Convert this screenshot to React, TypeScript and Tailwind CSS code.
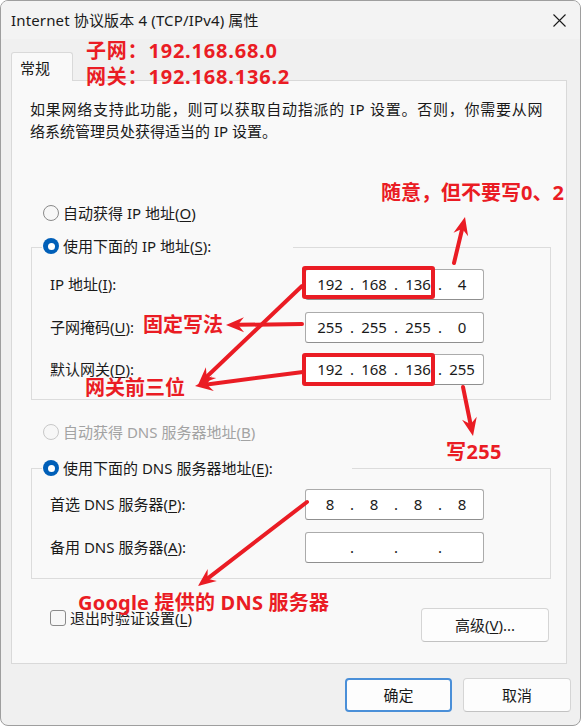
import React from "react";

const RED = "#ea1c24";

function Arrow({ x1, y1, x2, y2 }: { x1: number; y1: number; x2: number; y2: number }) {
  const dx = x2 - x1;
  const dy = y2 - y1;
  const L = Math.hypot(dx, dy);
  const ux = dx / L;
  const uy = dy / L;
  const hl = 18;
  const hw = 7.5;
  const notch = 12;
  const bx = x2 - ux * hl;
  const by = y2 - uy * hl;
  const px = -uy;
  const py = ux;
  const nx = x2 - ux * notch;
  const ny = y2 - uy * notch;
  const pts = `${x2},${y2} ${bx + px * hw},${by + py * hw} ${nx},${ny} ${bx - px * hw},${by - py * hw}`;
  return (
    <g>
      <line x1={x1} y1={y1} x2={nx} y2={ny} stroke={RED} strokeWidth={4} strokeLinecap="round" />
      <polygon points={pts} fill={RED} />
    </g>
  );
}

function Radio({ checked, disabled }: { checked?: boolean; disabled?: boolean }) {
  if (checked) {
    return (
      <span className="flex h-[16px] w-[16px] shrink-0 items-center justify-center rounded-full bg-[#005fb8]">
        <span className="h-[7px] w-[7px] rounded-full bg-white" />
      </span>
    );
  }
  return (
    <span
      className={
        disabled
          ? "h-[16px] w-[16px] shrink-0 rounded-full border border-[#c8c8c8] bg-[#f7f7f7]"
          : "h-[16px] w-[16px] shrink-0 rounded-full border border-[#8a8a8a] bg-[#f7f7f7]"
      }
    />
  );
}

function IpField({ parts }: { parts: string[] }) {
  return (
    <div className="mr-[66px] ml-auto flex h-[31px] w-[179px] items-center rounded-[3px] border border-[#ababab] border-b-[#8f8f8f] bg-white pl-[6px] font-['Noto_Sans',sans-serif] text-[15px] text-[#1a1a1a]">
      <span className="w-[36px] text-center">{parts[0]}</span>
      <span className="w-[8px] text-center">.</span>
      <span className="w-[36px] text-center">{parts[1]}</span>
      <span className="w-[8px] text-center">.</span>
      <span className="w-[36px] text-center">{parts[2]}</span>
      <span className="w-[8px] text-center">.</span>
      <span className="w-[36px] text-center">{parts[3]}</span>
    </div>
  );
}

export default function App() {
  return (
    <div className="relative h-[726px] w-[581px] font-['Noto_Sans','Noto_Sans_CJK_SC',sans-serif] text-[15px] text-[#1a1a1a]">
      <div className="flex h-[726px] w-[581px] flex-col overflow-hidden rounded-[8px] border border-[#9e9e9e] bg-[#f0f0f0]">
        {/* Title bar */}
        <div className="flex h-[38px] shrink-0 items-center justify-between bg-[#f3f3f3] pl-[10px] pr-[14px]">
          <span className="leading-[22px] tracking-[0.15px]">Internet 协议版本 4 (TCP/IPv4) 属性</span>
          <svg width="13" height="13" viewBox="0 0 13 13">
            <path d="M0.5 0.5 L12.5 12.5 M12.5 0.5 L0.5 12.5" stroke="#1a1a1a" strokeWidth="1.1" />
          </svg>
        </div>

        {/* Tabs */}
        <div className="ml-[10px] mt-[13px] flex">
          <div className="relative z-10 -mb-px flex h-[29px] w-[62px] items-center rounded-t-[3px] border border-b-0 border-[#d9d9d9] bg-[#f9f9f9] pl-[8px] pt-[1px] leading-[22px]">
            常规
          </div>
        </div>

        {/* Panel */}
        <div className="ml-[10px] flex h-[584px] w-[556px] flex-col border border-[#d9d9d9] bg-[#f9f9f9]">
          <p className="ml-[18px] mt-[17px] leading-[22px]">
            <span className="tracking-[0.75px]">如果网络支持此功能，则可以获取自动指派的 IP 设置。否则，你需要从网</span>
            <br />
            络系统管理员处获得适当的 IP 设置。
          </p>

          <div className="ml-[31px] mt-[60px] flex h-[22px] items-center gap-[4px]">
            <Radio />
            <span className="leading-[22px]">
              自动获得 IP 地址(<u className="underline-offset-2">O</u>)
            </span>
          </div>

          {/* IP group */}
          <div className="ml-[19px] mt-[23px] flex h-[153px] w-[520px] flex-col border border-[#dcdcdc]">
            <div className="-mt-[13px] ml-[10px] flex h-[22px] w-[251px] items-center gap-[4px] bg-[#f9f9f9] pl-[1px]">
              <Radio checked />
              <span className="leading-[22px]">
                使用下面的 IP 地址(<u className="underline-offset-2">S</u>):
              </span>
            </div>
            <div className="mt-[12px] flex h-[31px] items-center">
              <span className="ml-[18px]">
                IP 地址(<u className="underline-offset-2">I</u>):
              </span>
              <IpField parts={["192", "168", "136", "4"]} />
            </div>
            <div className="mt-[12px] flex h-[31px] items-center">
              <span className="ml-[18px]">
                子网掩码(<u className="underline-offset-2">U</u>):
              </span>
              <IpField parts={["255", "255", "255", "0"]} />
            </div>
            <div className="mt-[11px] flex h-[31px] items-center">
              <span className="ml-[18px]">
                默认网关(<u className="underline-offset-2">D</u>):
              </span>
              <IpField parts={["192", "168", "136", "255"]} />
            </div>
          </div>

          <div className="ml-[31px] mt-[21px] flex h-[22px] items-center gap-[4px] text-[#a3a3a3]">
            <Radio disabled />
            <span className="leading-[22px]">
              自动获得 DNS 服务器地址(<u className="underline-offset-2">B</u>)
            </span>
          </div>

          {/* DNS group */}
          <div className="ml-[19px] mt-[25px] flex h-[111px] w-[520px] flex-col border border-[#dcdcdc]">
            <div className="-mt-[12px] ml-[10px] flex h-[22px] w-[310px] items-center gap-[4px] bg-[#f9f9f9] pl-[1px]">
              <Radio checked />
              <span className="leading-[22px]">
                使用下面的 DNS 服务器地址(<u className="underline-offset-2">E</u>):
              </span>
            </div>
            <div className="mt-[10px] flex h-[31px] items-center">
              <span className="ml-[18px]">
                首选 DNS 服务器(<u className="underline-offset-2">P</u>):
              </span>
              <IpField parts={["8", "8", "8", "8"]} />
            </div>
            <div className="mt-[12px] flex h-[31px] items-center">
              <span className="ml-[18px]">
                备用 DNS 服务器(<u className="underline-offset-2">A</u>):
              </span>
              <IpField parts={["", "", "", ""]} />
            </div>
          </div>

          <div className="mt-[28px] flex items-start justify-between pr-[17px]">
            <div className="ml-[38px] flex h-[22px] items-center gap-[4px]">
              <span className="h-[16px] w-[16px] rounded-[3px] border border-[#8a8a8a] bg-[#f7f7f7]" />
              <span className="leading-[22px]">
                退出时验证设置(<u className="underline-offset-2">L</u>)
              </span>
            </div>
            <button className="mt-[1px] flex h-[34px] w-[128px] items-center justify-center rounded-[4px] border border-[#d5d5d5] border-b-[#c2c2c2] bg-[#fdfdfd] leading-[22px]">
              高级(<u className="underline-offset-2">V</u>)...
            </button>
          </div>
        </div>

        {/* Footer */}
        <div className="mt-[14px] flex justify-end gap-[11px] pr-[9px]">
          <button className="flex h-[34px] w-[107px] items-center justify-center rounded-[4px] border-2 border-[#4a8fd8] bg-[#fdfdfd] leading-[22px]">
            确定
          </button>
          <button className="flex h-[34px] w-[108px] items-center justify-center rounded-[4px] border border-[#d5d5d5] border-b-[#c2c2c2] bg-[#fdfdfd] leading-[22px]">
            取消
          </button>
        </div>
      </div>

      {/* Annotations overlay */}
      <div className="pointer-events-none absolute inset-0 font-['Noto_Sans','Noto_Sans_CJK_SC',sans-serif] text-[20px] font-bold leading-[20px] text-[#ea1c24]">
        <div className="absolute left-[86px] top-[41px] tracking-[0.8px]">子网：192.168.68.0</div>
        <div className="absolute left-[86px] top-[67px] tracking-[0.8px]">网关：192.168.136.2</div>
        <div className="absolute left-[381px] top-[183px]">随意，但不要写0、2</div>
        <div className="absolute left-[143px] top-[315px]">固定写法</div>
        <div className="absolute left-[85px] top-[378px]">网关前三位</div>
        <div className="absolute left-[446px] top-[442px] tracking-[0.4px]">写255</div>
        <div className="absolute left-[78px] top-[593px] tracking-[0.2px]">Google 提供的 DNS 服务器</div>

        <div className="absolute left-[302px] top-[266px] h-[33px] w-[133px] rounded-[3px] border-[4px] border-[#ea1c24]" />
        <div className="absolute left-[302px] top-[353px] h-[33px] w-[133px] rounded-[3px] border-[4px] border-[#ea1c24]" />

        <svg className="absolute left-0 top-0" width="581" height="726" viewBox="0 0 581 726">
          <Arrow x1={454} y1={263} x2={465} y2={217} />
          <Arrow x1={463} y1={387} x2={473} y2={436} />
          <Arrow x1={302} y1={324} x2={226} y2={325} />
          <Arrow x1={302} y1={286} x2={198} y2={385} />
          <Arrow x1={303} y1={372} x2={195} y2={386} />
          <Arrow x1={307} y1={502} x2={198} y2={586} />
        </svg>
      </div>
    </div>
  );
}
